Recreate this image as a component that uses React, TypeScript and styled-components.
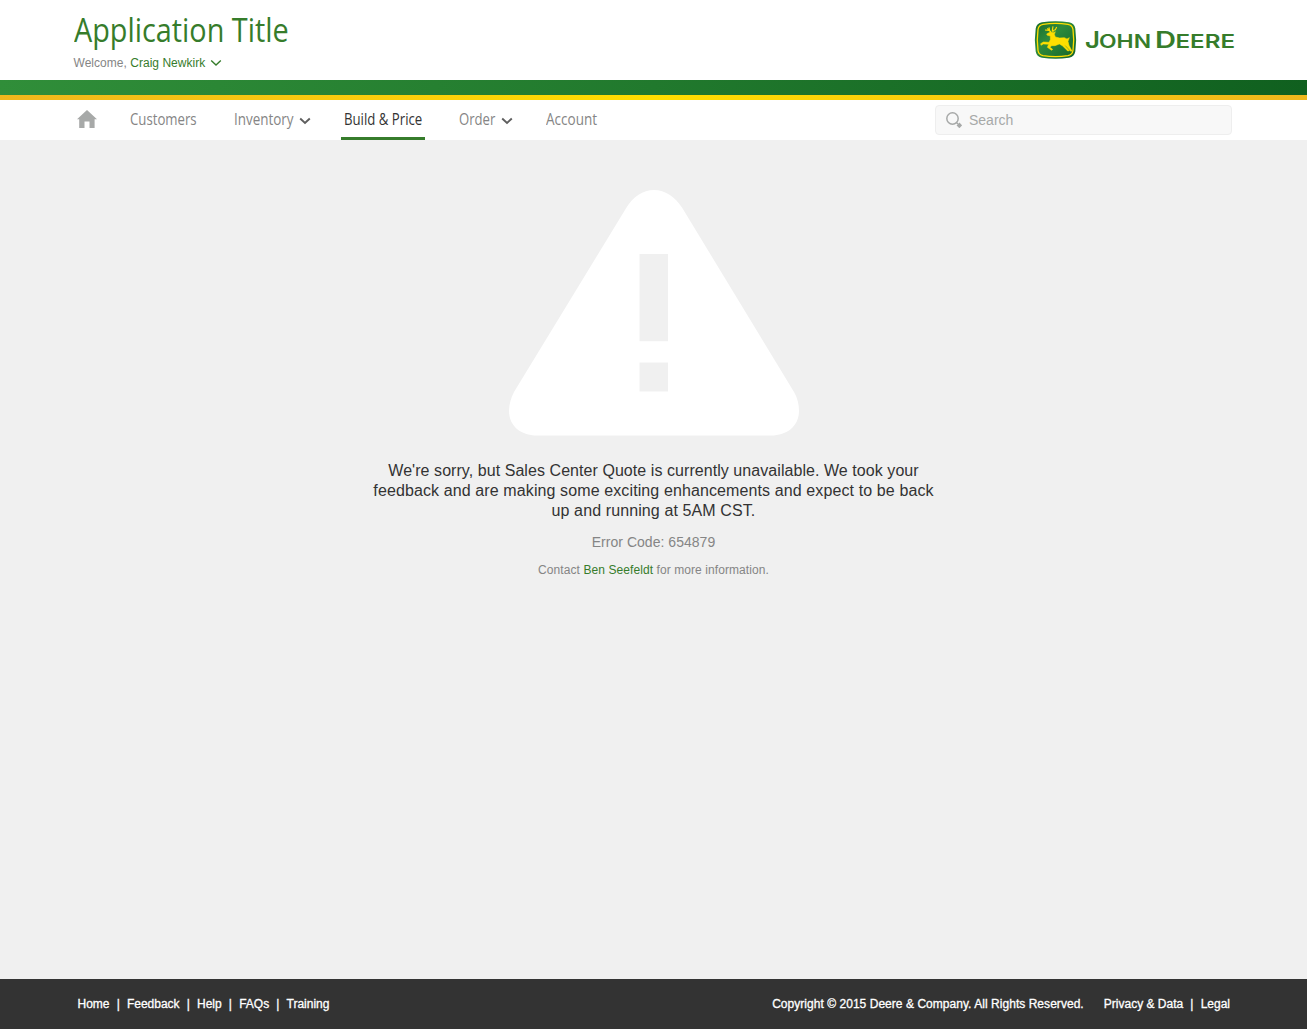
import React from 'react';
import styled, { createGlobalStyle } from 'styled-components';

const Global = createGlobalStyle`
  * { box-sizing: border-box; }
  body { margin: 0; background: #f0f0f0; font-family: "Liberation Sans", Arial, sans-serif; }
  p, h1 { margin: 0; font-weight: normal; }
  a { color: inherit; text-decoration: none; }
`;
const Page = styled.div`display: flex; flex-direction: column; height: 1029px; overflow: hidden;`;
const Header = styled.header`
  display: flex; justify-content: space-between; height: 80px; padding: 0 72px 0 73.5px; background: #fff;
`;
const Brand = styled.div`display: flex; flex-direction: column; padding-top: 8px;`;
const Title = styled.h1`
  font: 32px/44px "Open Sans", sans-serif; color: #367c2b; white-space: nowrap;
  transform: scaleX(0.9); transform-origin: left;
`;
const Welcome = styled.p`
  display: flex; align-items: center; font-size: 12px; line-height: 14px; margin-top: 4px;
  color: #858585; letter-spacing: 0.03px; white-space: pre;
`;
const GreenLink = styled.a`color: #367c2b !important;`;
const Logo = styled.svg`display: block; margin-top: 20px; width: 201px; height: 40px;`;
const GreenBar = styled.div`height: 15px; flex: none; background: linear-gradient(100deg, #308e39, #21792d 50%, #10601f);`;
const YellowBar = styled.div`height: 5px; flex: none; background: linear-gradient(90deg, #efb71d, #ffde00 50%, #efb71d);`;
const Nav = styled.nav`
  display: flex; align-items: center; height: 40px; flex: none; padding: 0 75px 0 77px; background: #fff;
`;
const HomeLink = styled.a`display: flex; margin: 0 30px 2px 0; svg { display: block; }`;
const NavItem = styled.a<{ $active?: boolean; $gap: number }>`
  display: flex; align-items: center; height: 40px; padding: 0 3px; margin-right: ${p => p.$gap}px;
  border-bottom: 3px solid ${p => (p.$active ? '#367c2b' : 'transparent')};
  && { color: ${p => (p.$active ? '#333' : '#858585')}; }
`;
const Label = styled.span<{ $w: number }>`
  display: block; width: ${p => p.$w}px; font: 16px/22px "Open Sans", sans-serif; white-space: nowrap;
`;
const Condensed = styled.span<{ $k: number }>`
  display: inline-block; transform: scaleX(${p => p.$k}); transform-origin: left;
`;
const Arrow = styled.span`display: flex; padding: 4px 0 0 5px;`;
const Search = styled.label`
  display: flex; align-items: center; width: 297px; height: 30px; margin-left: auto; padding-left: 10px;
  border: 1px solid #eee; border-radius: 4px; background: #f8f8f8;
`;
const Input = styled.input`
  flex: 1; margin-left: 7px; padding: 0; border: 0; outline: 0; background: none;
  font: 14px/16px "Liberation Sans", sans-serif;
  &::placeholder { color: #a7a9a8; opacity: 1; }
`;
const Main = styled.main`
  display: flex; flex-direction: column; align-items: center; flex: 1; padding-top: 50px; background: #f0f0f0; text-align: center;
`;
const Warning = styled.svg`display: block; width: 290px; height: 246px;`;
const Message = styled.p`margin-top: 25px; font-size: 16px; line-height: 20px; letter-spacing: 0.11px; color: #333;`;
const FirstLine = styled.span`letter-spacing: 0.06px;`;
const ErrorCode = styled.p`margin-top: 13px; font-size: 14px; line-height: 16px; letter-spacing: 0.03px; color: #858585;`;
const Contact = styled.p`margin-top: 13px; font-size: 12px; line-height: 14px; letter-spacing: 0.08px; color: #858585;`;
const Footer = styled.footer`
  display: flex; justify-content: space-between; align-items: center; height: 50px; flex: none;
  padding: 0 77px 0 77.5px; background: #333; color: #fff; font-size: 12px; line-height: 14px;
  -webkit-text-stroke: 0.3px #fff;
`;
const Links = styled.div`display: flex; gap: 7.15px;`;
const Copyright = styled.span`letter-spacing: 0.04px; margin-right: 13px;`;

const Chevron = ({ color, width }: { color: string; width: number }) => (
  <svg width="12" height="8" viewBox="0 0 12 8" fill="none" stroke={color} strokeWidth={width}>
    <path d="M1.2 1.5 6 6 10.8 1.500" />
  </svg>
);

const Deer = () => (
  <g fill="#ffde00" stroke="#ffde00">
    <path strokeWidth="1.6" d="M41 48 52 42 61 44 67 41 64 49 67 57 80 60 94 59 102 63 109 59 105 70 108 82 117 99 113 100 100 85 94 80 109 98 104 99 88 83 79 78 66 83 56 83 51 88 59 94 56 97 43 88 47 79 31 78 24 82 23 77 31 72 48 73 52 65 52 54 43 52Z" />
    <path d="M55 44 48 37 36 36M50 39 48 28M61 43 58 37 60 25M58 38 67 35 71 27M54 42 43 31" fill="none" strokeWidth="3.4" />
  </g>
);

const menu = [
  { name: 'Customers', w: 66.5, k: 0.825, gap: 31 },
  { name: 'Inventory', w: 60, k: 0.84, gap: 27.5, more: true },
  { name: 'Build & Price', w: 78, k: 0.825, gap: 31, active: true },
  { name: 'Order', w: 37, k: 0.82, gap: 26.5, more: true },
  { name: 'Account', w: 51.5, k: 0.845, gap: 0 },
];

const LinkList = ({ items }: { items: string[] }) => (
  <Links>
    {items.map((item, i) => (
      <React.Fragment key={item}>
        {i > 0 && <span>|</span>}
        <a href="#">{item}</a>
      </React.Fragment>
    ))}
  </Links>
);

export default function App() {
  return (
    <Page>
      <Global />
      <Header>
        <Brand>
          <Title>Application Title</Title>
          <Welcome>
            {'Welcome, '}<GreenLink href="#">Craig Newkirk</GreenLink>
            <span style={{ width: 5 }} />
            <Chevron color="#367c2b" width={1.4} />
          </Welcome>
        </Brand>
        <Logo viewBox="1034 20 201 40" role="img" aria-label="John Deere">
          <defs>
            <linearGradient id="badge" x1="0" y1="0" x2="1" y2="1">
              <stop offset="0" stopColor="#176b2c" /><stop offset=".4" stopColor="#2f8b3c" /><stop offset="1" stopColor="#126229" />
            </linearGradient>
          </defs>
          <path d="M1042 22.300Q1055.500 20 1069 22.300 1074.300 23.200 1075.300 28.500 1077 40 1075.300 51.500 1074.300 56.800 1069 57.700 1055.500 60 1042 57.700 1036.700 56.800 1035.700 51.500 1034 40 1035.700 28.500 1036.700 23.200 1042 22.300Z" fill="url(#badge)" />
          <path d="M1043 24.400Q1055.500 22.400 1068 24.400 1072.300 25.200 1073 29.500 1074.400 40 1073 50.500 1072.300 54.800 1068 55.600 1055.500 57.600 1043 55.600 1038.700 54.800 1038 50.500 1036.600 40 1038 29.500 1038.700 25.200 1043 24.400Z" fill="none" stroke="#ffde00" strokeWidth="1.300" />
          <g transform="translate(1033 18) scale(.3333)"><Deer /></g>
          <g fill="#367c2b" fontFamily="Inter, sans-serif" fontWeight="600">
            <text x="1085" y="47.700" fontSize="22.300" textLength="15" lengthAdjust="spacingAndGlyphs">J</text>
            <text x="1099" y="47.700" fontSize="18" textLength="52" lengthAdjust="spacingAndGlyphs">OHN</text>
            <text x="1155" y="47.700" fontSize="22.300" textLength="21" lengthAdjust="spacingAndGlyphs">D</text>
            <text x="1175.500" y="47.700" fontSize="18" textLength="59.500" lengthAdjust="spacingAndGlyphs">EERE</text>
          </g>
        </Logo>
      </Header>
      <GreenBar />
      <YellowBar />
      <Nav>
        <HomeLink href="#" aria-label="Home">
          <svg width="20" height="18" viewBox="0 0 20 18" fill="#a7a9a8"><path d="M10 0 20 9.300H17.600V18H12.500V11.500H7.500V18H2.200V9.300H0Z" /></svg>
        </HomeLink>
        {menu.map(m => (
          <NavItem key={m.name} href="#" $active={m.active} $gap={m.gap}>
            <Label $w={m.w}><Condensed $k={m.k}>{m.name}</Condensed></Label>
            {m.more && <Arrow><Chevron color="#5e5e5e" width={1.900} /></Arrow>}
          </NavItem>
        ))}
        <Search>
          <svg width="16" height="16" viewBox="0 0 16 16" fill="none" stroke="#a7a9a8">
            <circle cx="6.500" cy="6.500" r="5.700" strokeWidth="1.500" /><path d="M12 12 14.800 14.800" strokeWidth="4" /><path d="M10.400 10.400 12 12" strokeWidth="1.400" />
          </svg>
          <Input placeholder="Search" />
        </Search>
      </Nav>
      <Main>
        <Warning viewBox="0 0 290 246">
          <path fill="#fff" fillRule="evenodd" d="M145 0C156 0 166 7 173 17.500L285 202C288.500 208 290 214 290 221C290 236 278 245.500 262 245.500H28C12 245.500 0 236 0 221C0 214 2 208 5 202L117.500 17.500C124 7 134 0 145 0ZM130.500 64V151.300H159V64ZM130.500 172.500V201.500H159V172.500Z" />
        </Warning>
        <Message>
          <FirstLine>We're sorry, but Sales Center Quote is currently unavailable. We took your</FirstLine><br />
          feedback and are making some exciting enhancements and expect to be back<br />
          up and running at 5AM CST.
        </Message>
        <ErrorCode>Error Code: 654879</ErrorCode>
        <Contact>Contact <GreenLink href="#">Ben Seefeldt</GreenLink> for more information.</Contact>
      </Main>
      <Footer>
        <LinkList items={['Home', 'Feedback', 'Help', 'FAQs', 'Training']} />
        <Links>
          <Copyright>Copyright © 2015 Deere &amp; Company. All Rights Reserved.</Copyright>
          <LinkList items={['Privacy & Data', 'Legal']} />
        </Links>
      </Footer>
    </Page>
  );
}
